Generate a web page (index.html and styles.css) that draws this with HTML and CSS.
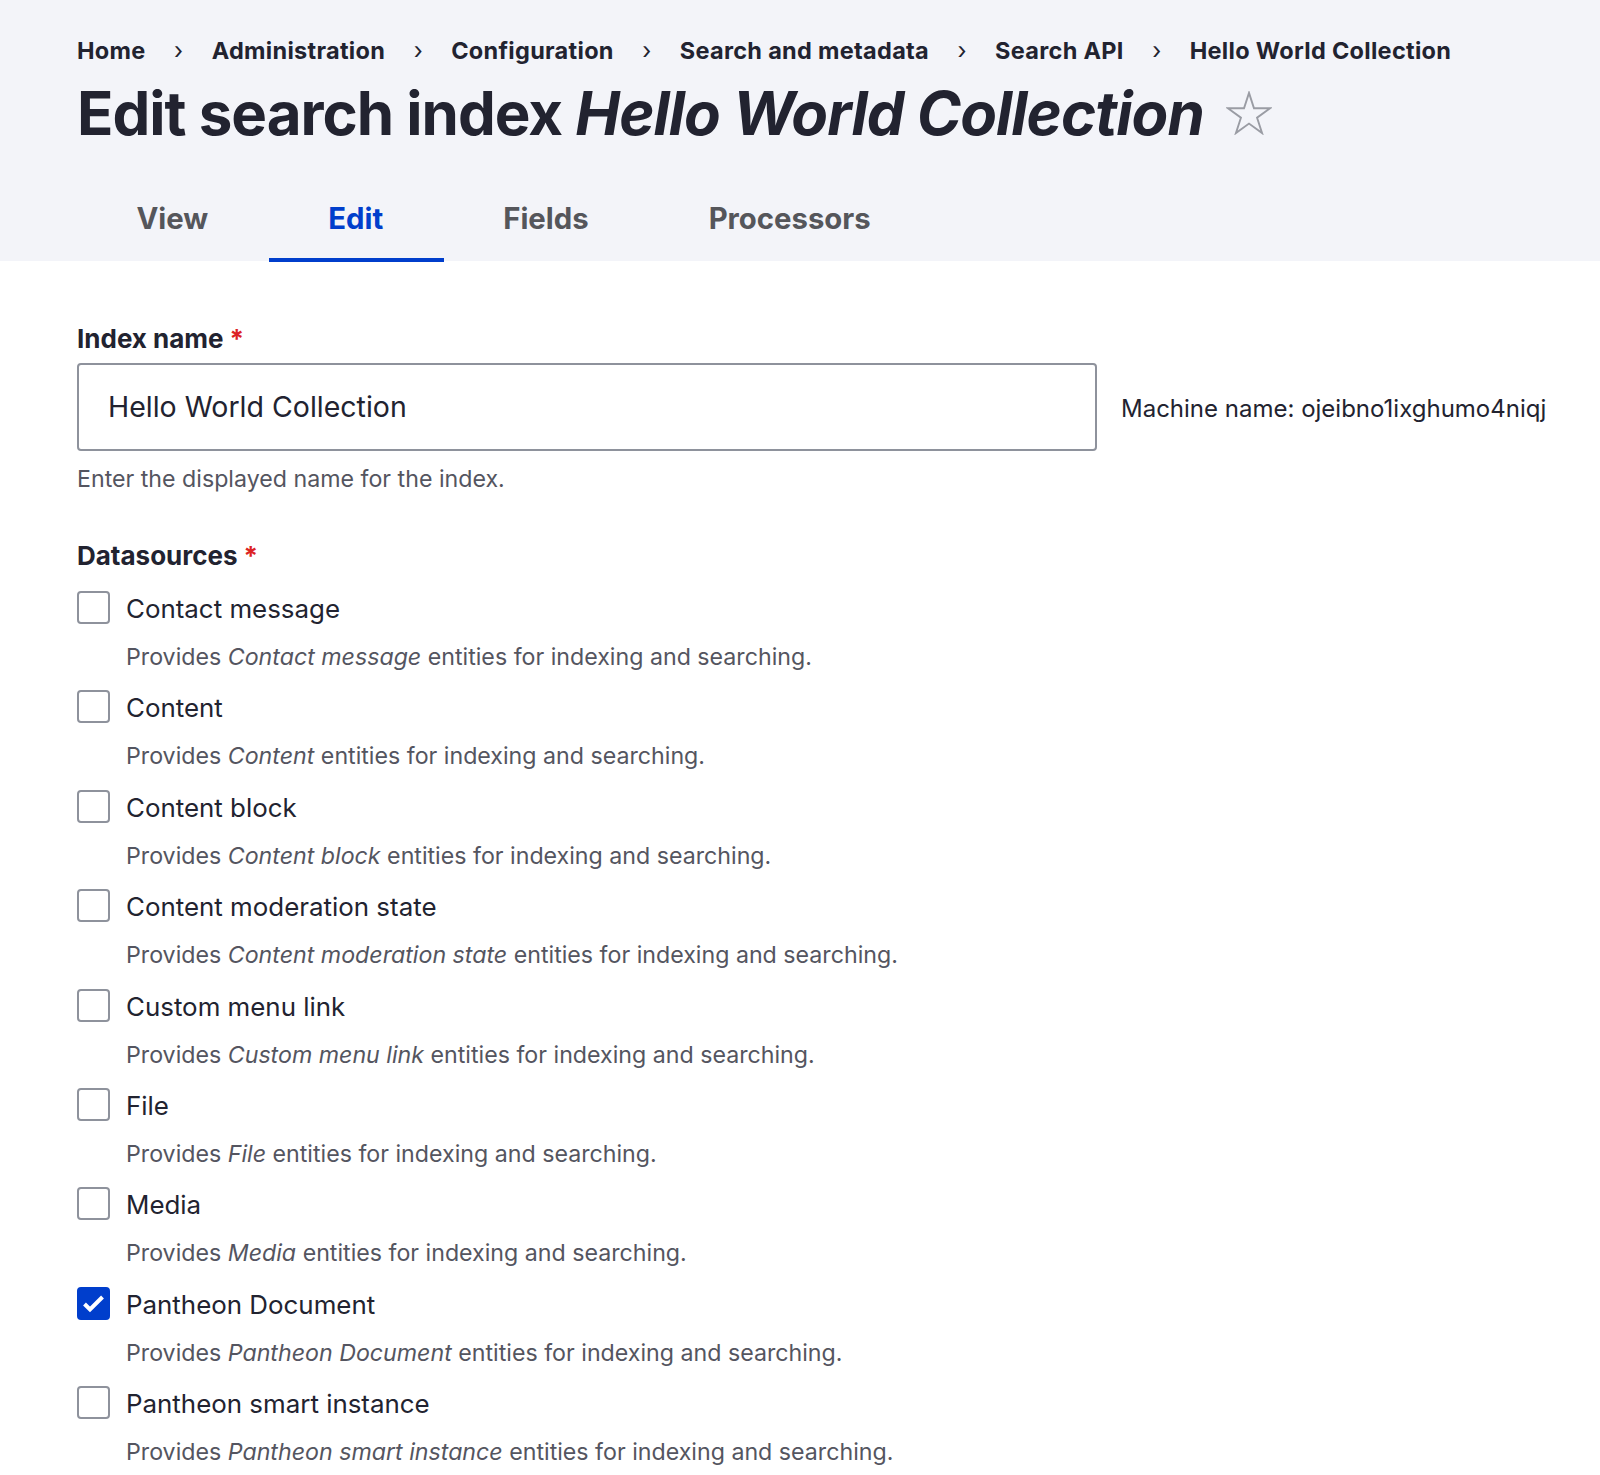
FILE: index.html
```html
<!DOCTYPE html>
<html lang="en">
<head>
<meta charset="utf-8">
<title>Edit search index Hello World Collection</title>
<link rel="stylesheet" href="styles.css">
</head>
<body>
<header class="page-header">
  <nav class="breadcrumb">
    <a href="#">Home</a><span class="sep">›</span>
    <a href="#">Administration</a><span class="sep">›</span>
    <a href="#">Configuration</a><span class="sep">›</span>
    <a href="#">Search and metadata</a><span class="sep">›</span>
    <a href="#">Search API</a><span class="sep">›</span>
    <a href="#">Hello World Collection</a>
  </nav>
  <h1 class="title">Edit search index <em>Hello World Collection</em><span class="star"><svg width="46" height="44" viewBox="-2 -2 48 46"><polygon points="22,0 27.21,16.03 44.06,16.03 30.43,25.94 35.64,41.97 22,32.06 8.36,41.97 13.57,25.94 -0.06,16.03 16.79,16.03" fill="none" stroke="#9a9ca4" stroke-width="2"/></svg></span></h1>
  <nav class="tabs">
    <a href="#" class="tab">View</a>
    <a href="#" class="tab active">Edit</a>
    <a href="#" class="tab">Fields</a>
    <a href="#" class="tab">Processors</a>
  </nav>
</header>
<main class="content">
  <div class="form-item">
    <label class="form-label">Index name<span class="req">*</span></label>
    <div class="name-row">
      <div class="text-input">Hello World Collection</div>
      <span class="machine">Machine name: ojeibno1ixghumo4niqj</span>
    </div>
    <div class="desc">Enter the displayed name for the index.</div>
  </div>
  <div class="datasources">
    <div class="form-label legend">Datasources<span class="req">*</span></div>
    <div class="option"><div class="row"><span class="cb"></span><span class="opt-label">Contact message</span></div><div class="desc">Provides <em>Contact message</em> entities for indexing and searching.</div></div>
    <div class="option"><div class="row"><span class="cb"></span><span class="opt-label">Content</span></div><div class="desc">Provides <em>Content</em> entities for indexing and searching.</div></div>
    <div class="option"><div class="row"><span class="cb"></span><span class="opt-label">Content block</span></div><div class="desc">Provides <em>Content block</em> entities for indexing and searching.</div></div>
    <div class="option"><div class="row"><span class="cb"></span><span class="opt-label">Content moderation state</span></div><div class="desc">Provides <em>Content moderation state</em> entities for indexing and searching.</div></div>
    <div class="option"><div class="row"><span class="cb"></span><span class="opt-label">Custom menu link</span></div><div class="desc">Provides <em>Custom menu link</em> entities for indexing and searching.</div></div>
    <div class="option"><div class="row"><span class="cb"></span><span class="opt-label">File</span></div><div class="desc">Provides <em>File</em> entities for indexing and searching.</div></div>
    <div class="option"><div class="row"><span class="cb"></span><span class="opt-label">Media</span></div><div class="desc">Provides <em>Media</em> entities for indexing and searching.</div></div>
    <div class="option"><div class="row"><span class="cb checked"><svg width="33" height="33" viewBox="0 0 33 33"><path d="M7.5 17 L13 22.5 L25.5 10" fill="none" stroke="#fff" stroke-width="4"/></svg></span><span class="opt-label">Pantheon Document</span></div><div class="desc">Provides <em>Pantheon Document</em> entities for indexing and searching.</div></div>
    <div class="option"><div class="row"><span class="cb"></span><span class="opt-label">Pantheon smart instance</span></div><div class="desc">Provides <em>Pantheon smart instance</em> entities for indexing and searching.</div></div>
  </div>
</main>
</body>
</html>
```
FILE: styles.css
```css
html, body {
  margin: 0;
  padding: 0;
  background: #fff;
}
body {
  font-family: Inter, "Noto Sans", sans-serif;
  color: #222330;
}
a {
  color: inherit;
  text-decoration: none;
}
.page-header {
  background: #f3f4f9;
  padding: 33px 0 0 77px;
  height: 261px;
  box-sizing: border-box;
}
.breadcrumb {
  font-size: 23.5px;
  letter-spacing: 0.3px;
  line-height: 36px;
  font-weight: 700;
  white-space: nowrap;
  display: flex;
  align-items: center;
}
.breadcrumb .sep {
  width: 66px;
  text-align: center;
  font-weight: 400;
  letter-spacing: 0;
}
.title {
  margin: 9px 0 0;
  font-size: 60px;
  line-height: 70px;
  font-weight: 700;
  letter-spacing: -1px;
  display: flex;
  align-items: center;
  white-space: pre;
}
.title em {
  font-style: italic;
}
.star {
  display: inline-flex;
  margin-left: 22px;
}
.star svg {
  display: block;
}
.tabs {
  margin-top: 17px;
  display: flex;
}
.tab {
  padding: 14px 60.5px 0 59.5px;
  line-height: 79px;
  font-size: 29.3px;
  font-weight: 700;
  color: #55565b;
  border-bottom: 4px solid transparent;
}
.tab.active {
  color: #003ecc;
  border-bottom-color: #003ecc;
}
.content {
  padding: 60px 0 0 77px;
}
.form-label {
  display: block;
  font-size: 26px;
  line-height: 36px;
  font-weight: 700;
}
.req {
  color: #dc2323;
  margin-left: 6px;
}
.name-row {
  margin-top: 6px;
  display: flex;
  align-items: center;
}
.text-input {
  width: 1020px;
  height: 88px;
  box-sizing: border-box;
  border: 2px solid #8e929c;
  border-radius: 4px;
  padding-left: 29px;
  font-size: 28.5px;
  line-height: 84px;
  color: #222330;
}
.machine {
  margin-left: 24px;
  font-size: 24px;
  line-height: 36px;
  margin-top: 4px;
}
.desc {
  font-size: 23.2px;
  line-height: 36px;
  color: #545560;
}
.form-item .desc {
  margin-top: 10px;
}
.datasources {
  margin-top: 41px;
}
.legend {
  margin-bottom: 17px;
}
.option {
  margin-bottom: 15.4px;
}
.row {
  display: flex;
  align-items: flex-start;
  height: 36px;
}
.cb {
  width: 33px;
  height: 33px;
  box-sizing: border-box;
  border: 2px solid #8e929c;
  border-radius: 4px;
  background: #fff;
  flex: none;
}
.cb.checked {
  background: #003ecc;
  border-color: #003ecc;
  position: relative;
}
.cb.checked svg {
  position: absolute;
  left: -2px;
  top: -2px;
}
.opt-label {
  margin-left: 16px;
  font-size: 25.9px;
  line-height: 36px;
}
.option .desc {
  margin-top: 12px;
  padding-left: 49px;
}
```
